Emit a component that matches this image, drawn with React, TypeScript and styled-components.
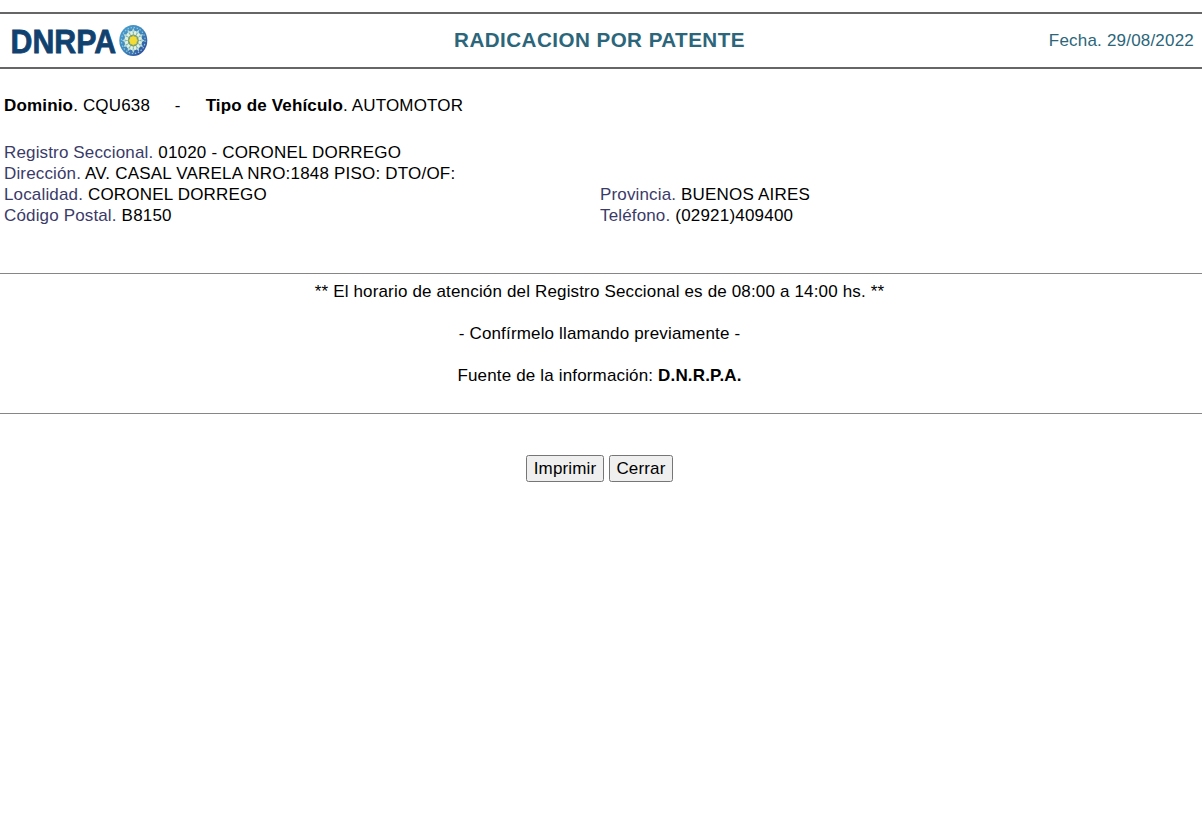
import React from 'react';
import styled, { createGlobalStyle } from 'styled-components';

const GlobalStyle = createGlobalStyle`
  body {
    margin: 0;
    background: #fff;
    color: #000;
    font-family: Arial, 'Liberation Sans', sans-serif;
    font-size: 17px;
    line-height: 21px;
    letter-spacing: 0.16px;
  }
`;

const Page = styled.main`
  padding-top: 12px;
`;

const Header = styled.header`
  display: grid;
  grid-template-columns: 1fr auto 1fr;
  align-items: center;
  height: 53px;
  padding: 0 8px 0 8px;
  border: solid #666;
  border-width: 2px 0;
  color: #2b667a;
`;

const Title = styled.h1`
  margin: 0;
  padding: 0 3px 2px 0;
  font-size: 20.6px;
  line-height: 24px;
  letter-spacing: 0.46px;
`;

const IssueDate = styled.div`
  justify-self: end;
  letter-spacing: 0.2px;
`;

const Vehicle = styled.div`
  display: flex;
  padding: 26px 4px 0;
  white-space: pre;
  letter-spacing: 0.16px;
`;

const Dash = styled.span`
  padding: 0 25px 0 24.8px;
`;

const Office = styled.section`
  display: grid;
  grid-template-columns: 596px 1fr;
  padding: 26px 4px 47px;
`;

const Field = styled.div<{ $wide?: boolean }>`
  grid-column: ${({ $wide }) => ($wide ? '1 / -1' : 'auto')};
  letter-spacing: 0.2px;
`;

const Label = styled.span`
  color: #3b3b69;
  letter-spacing: 0.15px;
`;

const Notice = styled.section`
  display: flex;
  flex-direction: column;
  align-items: center;
  gap: 21px;
  height: 132px;
  box-sizing: content-box;
  padding: 7px 3px 0 0;
  border: solid #868686;
  border-width: 1px 0;
`;

const Actions = styled.div`
  display: flex;
  justify-content: center;
  gap: 5px;
  padding: 41px 3px 0 0;
`;

const Button = styled.button<{ $width: number }>`
  width: ${({ $width }) => $width}px;
  height: 27px;
  padding: 0;
  border: 1px solid #767676;
  border-radius: 2.5px;
  background: #efefef;
  color: #000;
  font: inherit;
  letter-spacing: inherit;
`;

const spokes = (count: number, offset = 0) =>
  Array.from({ length: count }, (_, i) => (i * 360) / count + offset);

const Logo = () => (
  <svg width="144" height="51" viewBox="8 15 144 51" role="img" aria-label="DNRPA">
    <defs>
      <linearGradient id="disc" x1="0" y1="0" x2="1" y2="1">
        <stop offset="0" stopColor="#4b9fd0" />
        <stop offset="0.5" stopColor="#3f87bd" />
        <stop offset="1" stopColor="#2b3d94" />
      </linearGradient>
    </defs>
    <text
      x="10.6"
      y="52.5"
      fontSize="34"
      fontWeight="700"
      fill="#11426f"
      stroke="#11426f"
      strokeWidth="0.8"
      letterSpacing="0"
      textLength="105.4"
      lengthAdjust="spacingAndGlyphs"
    >
      DNRPA
    </text>
    <g transform="translate(133.3 40.5) scale(0.91 1)">
      <circle r="15.4" fill="url(#disc)" />
      <circle r="13" fill="none" stroke="#8cc5d8" strokeWidth="1.3" strokeDasharray="1.6 1.8" />
      {spokes(12).map((a) => (
        <path key={a} d="M0-12.4 2.6-7.5 0-3-2.6-7.5Z" fill="#b9dcd8" transform={`rotate(${a})`} />
      ))}
      <circle r="8.8" fill="#76b3b8" />
      {spokes(12, 15).map((a) => (
        <ellipse key={a} cy="-7.5" rx="1.5" ry="2.4" fill="#e4f0dc" transform={`rotate(${a})`} />
      ))}
      <circle r="6" fill="#739f78" />
      {spokes(8).map((a) => (
        <circle key={a} cy="-3.6" r="1.3" fill="#d9c63e" transform={`rotate(${a})`} />
      ))}
      <circle r="3.9" fill="#f4dc36" />
    </g>
  </svg>
);

export default function App() {
  return (
    <>
      <GlobalStyle />
      <Page>
        <Header>
          <Logo />
          <Title>RADICACION POR PATENTE</Title>
          <IssueDate>Fecha. 29/08/2022</IssueDate>
        </Header>
        <Vehicle>
          <span><b>Dominio</b>. CQU638</span>
          <Dash>-</Dash>
          <span><b>Tipo de Vehículo</b>. AUTOMOTOR</span>
        </Vehicle>
        <Office>
          <Field $wide><Label>Registro Seccional.</Label> 01020 - CORONEL DORREGO</Field>
          <Field $wide><Label>Dirección.</Label> AV. CASAL VARELA NRO:1848 PISO: DTO/OF:</Field>
          <Field><Label>Localidad.</Label> CORONEL DORREGO</Field>
          <Field><Label>Provincia.</Label> BUENOS AIRES</Field>
          <Field><Label>Código Postal.</Label> B8150</Field>
          <Field><Label>Teléfono.</Label> (02921)409400</Field>
        </Office>
        <Notice>
          <div>** El horario de atención del Registro Seccional es de 08:00 a 14:00 hs. **</div>
          <div>- Confírmelo llamando previamente -</div>
          <div>Fuente de la información: <b>D.N.R.P.A.</b></div>
        </Notice>
        <Actions>
          <Button $width={78}>Imprimir</Button>
          <Button $width={64}>Cerrar</Button>
        </Actions>
      </Page>
    </>
  );
}
